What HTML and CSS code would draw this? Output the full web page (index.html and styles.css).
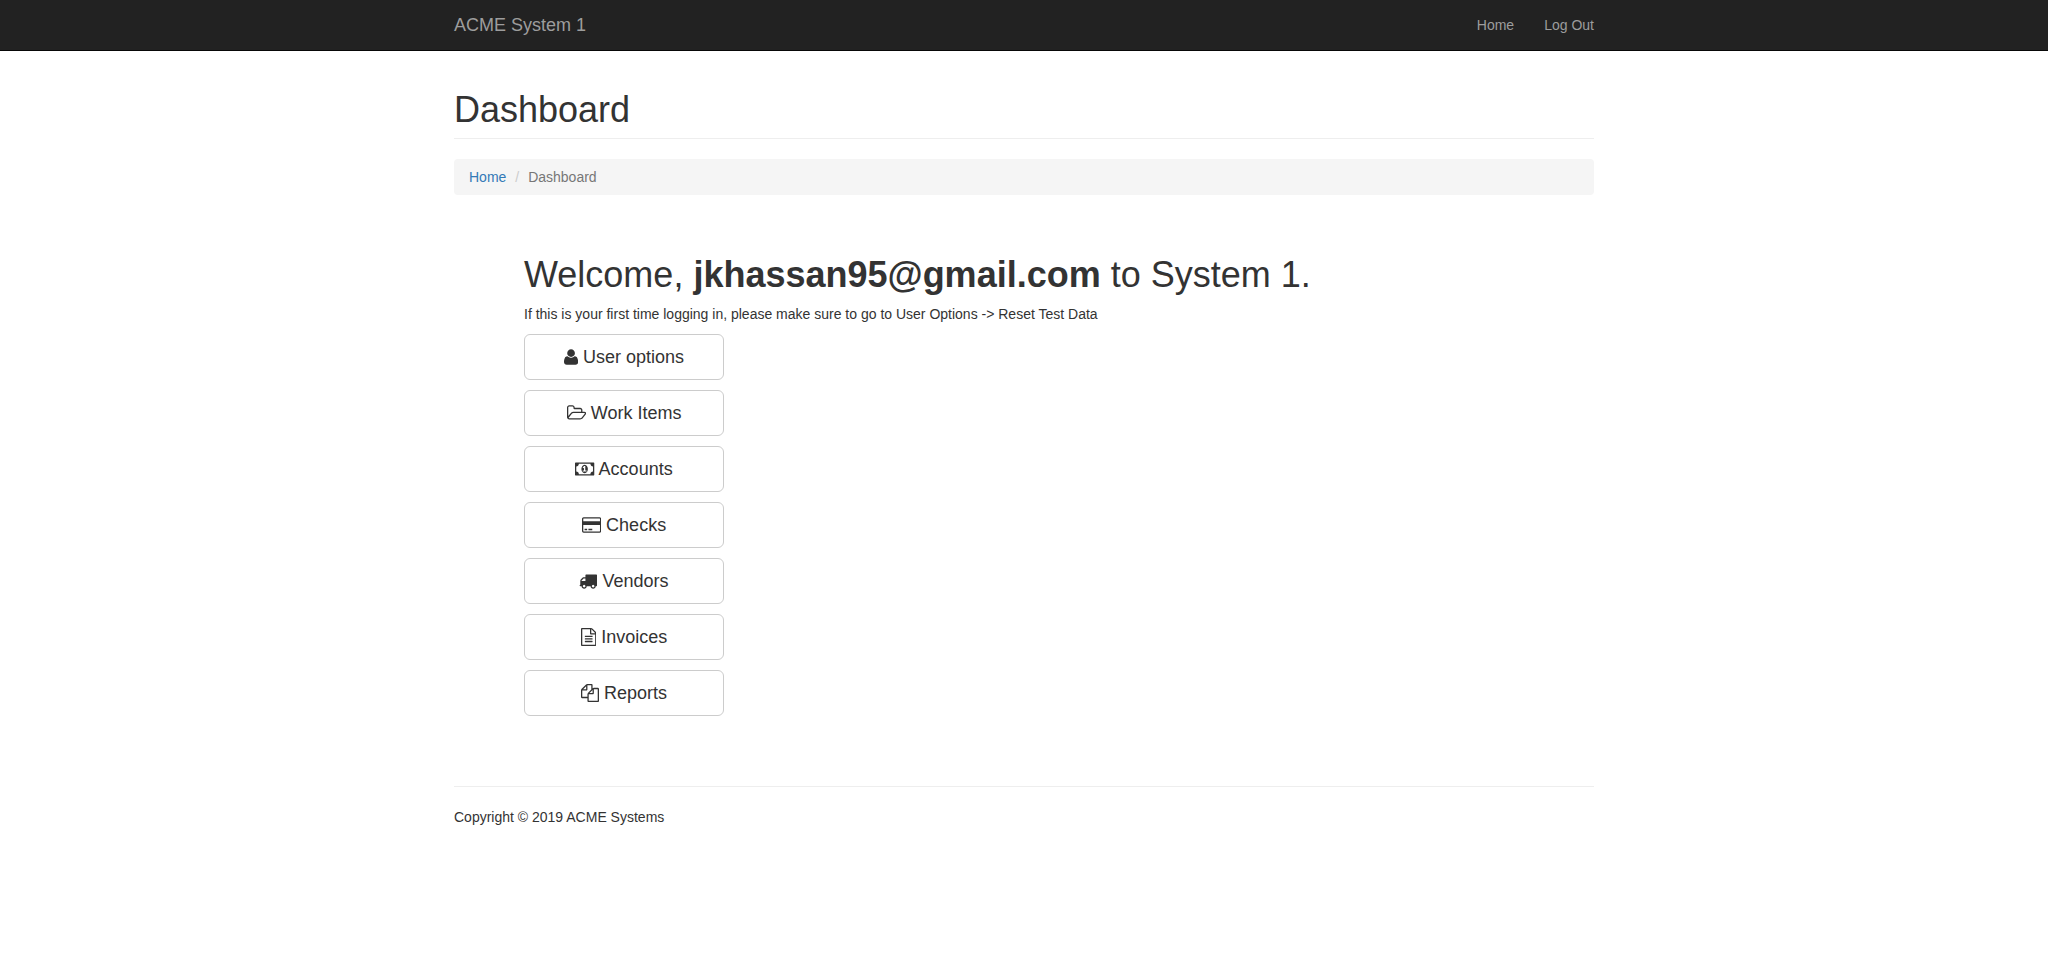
FILE: index.html
```html
<!DOCTYPE html>
<html lang="en">
<head>
<meta charset="utf-8">
<title>ACME System 1 - Dashboard</title>
<link rel="stylesheet" href="styles.css">
</head>
<body>
<nav class="navbar">
  <div class="container navbar-inner">
    <a class="navbar-brand" href="#">ACME System 1</a>
    <ul class="navbar-links">
      <li><a href="#">Home</a></li>
      <li><a href="#">Log Out</a></li>
    </ul>
  </div>
</nav>
<div class="container">
  <h1 class="page-header">Dashboard</h1>
  <ul class="breadcrumb">
    <li><a href="#">Home</a></li>
    <li class="active">Dashboard</li>
  </ul>
  <main class="welcome">
    <h1>Welcome, <b>jkhassan95@gmail.com</b> to System 1.</h1>
    <p>If this is your first time logging in, please make sure to go to User Options -&gt; Reset Test Data</p>
    <div class="menu">
      <button class="btn"><svg class="icon icon-user" viewBox="192 0 1408 1792"><path d="M1600 1405q0 120-73 189.5t-194 69.5h-874q-121 0-194-69.5t-73-189.5q0-53 3.5-103.5t14-109 26.5-108.5 43-97.5 62-81 85.5-53.5 111.5-20q9 0 42 21.5t74.5 48 108 48 133.5 21.5 133.5-21.5 108-48 74.5-48 42-21.5q61 0 111.5 20t85.5 53.5 62 81 43 97.5 26.5 108.5 14 109 3.5 103.5zm-320-893q0 159-112.5 271.5t-271.5 112.5-271.5-112.5-112.5-271.5 112.5-271.5 271.5-112.5 271.5 112.5 112.5 271.5z"/></svg> User options</button>
      <button class="btn"><svg class="icon icon-wide" viewBox="64 0 1920 1792"><path d="M1845 931q0-35-53-35h-1088q-40 0-85.5 21.5t-71.5 52.5l-294 363q-18 24-18 40 0 35 53 35h1088q40 0 86-22t71-53l294-363q18-22 18-39zm-1141-163h768v-160q0-40-28-68t-68-28h-576q-40 0-68-28t-28-68v-64q0-40-28-68t-68-28h-320q-40 0-68 28t-28 68v853l256-315q44-53 116-87.5t140-34.5zm1269 163q0 62-46 120l-295 363q-43 53-116 87.5t-140 34.5h-1088q-92 0-158-66t-66-158v-960q0-92 66-158t158-66h320q92 0 158 66t66 158v32h544q92 0 158 66t66 158v160h192q54 0 99 24.5t67 70.5q15 32 15 68z"/></svg> Work Items</button>
      <button class="btn"><svg class="icon icon-wide" viewBox="0 0 1920 1792"><path d="M768 1152h384v-96h-128v-448h-114l-148 137 77 80q42-37 55-57h2v288h-128v96zm512-256q0 70-21 142t-59.5 134-101.5 101-138 39-138-39-101.5-101-59.5-134-21-142 21-142 59.5-134 101.5-101 138-39 138 39 101.5 101 59.5 134 21 142zm512 256v-512q-106 0-181-75t-75-181h-1152q0 106-75 181t-181 75v512q106 0 181 75t75 181h1152q0-106 75-181t181-75zm128-832v1152q0 26-19 45t-45 19h-1792q-26 0-45-19t-19-45v-1152q0-26 19-45t45-19h1792q26 0 45 19t19 45z"/></svg> Accounts</button>
      <button class="btn"><svg class="icon icon-wide" viewBox="0 0 1920 1792"><path d="M1760 128q66 0 113 47t47 113v1216q0 66-47 113t-113 47h-1600q-66 0-113-47t-47-113v-1216q0-66 47-113t113-47h1600zm-1600 128q-13 0-22.5 9.5t-9.5 22.5v224h1664v-224q0-13-9.5-22.5t-22.5-9.5h-1600zm1600 1280q13 0 22.5-9.5t9.5-22.5v-608h-1664v608q0 13 9.5 22.5t22.5 9.5h1600zm-1504-128v-128h256v128h-256zm384 0v-128h384v128h-384z"/></svg> Checks</button>
      <button class="btn"><svg class="icon" viewBox="0 0 1792 1792"><path d="M640 1408q0-52-38-90t-90-38-90 38-38 90 38 90 90 38 90-38 38-90zm-384-512h384v-256h-158q-13 0-22 9l-195 195q-9 9-9 22v30zm1280 512q0-52-38-90t-90-38-90 38-38 90 38 90 90 38 90-38 38-90zm256-1088v1024q0 15-4 26.5t-13.5 18.5-16.5 11.5-23.5 6-22.5 2-25.5 0-22.5-.5q0 106-75 181t-181 75-181-75-75-181h-384q0 106-75 181t-181 75-181-75-75-181h-64q-3 0-22.5.5t-25.5 0-22.5-2-23.5-6-16.5-11.5-13.5-18.5-4-26.5q0-26 19-45t45-19v-320q0-8-.5-35t0-38 2.5-34.5 6.5-37 14-30.5 22.5-30l198-198q19-19 50.5-32t58.5-13h160v-192q0-26 19-45t45-19h1024q26 0 45 19t19 45z"/></svg> Vendors</button>
      <button class="btn"><svg class="icon icon-file" viewBox="128 0 1536 1792"><path d="M1596 380q28 28 48 76t20 88v1152q0 40-28 68t-68 28h-1344q-40 0-68-28t-28-68v-1600q0-40 28-68t68-28h896q40 0 88 20t76 48zm-444-244v376h376q-10-29-22-41l-313-313q-12-12-41-22zm384 1528v-1024h-416q-40 0-68-28t-28-68v-416h-768v1536h1280zm-1024-864q0-14 9-23t23-9h704q14 0 23 9t9 23v64q0 14-9 23t-23 9h-704q-14 0-23-9t-9-23v-64zm736 224q14 0 23 9t9 23v64q0 14-9 23t-23 9h-704q-14 0-23-9t-9-23v-64q0-14 9-23t23-9h704zm0 256q14 0 23 9t9 23v64q0 14-9 23t-23 9h-704q-14 0-23-9t-9-23v-64q0-14 9-23t23-9h704z"/></svg> Invoices</button>
      <button class="btn"><svg class="icon" viewBox="0 0 1792 1792"><path d="M1696 384q40 0 68 28t28 68v1216q0 40-28 68t-68 28h-960q-40 0-68-28t-28-68v-288h-544q-40 0-68-28t-28-68v-672q0-40 20-88t48-76l408-408q28-28 76-48t88-20h416q40 0 68 28t28 68v328q68-40 128-40h416zm-544 213l-299 299h299v-299zm-640-384l-299 299h299v-299zm196 647l316-316v-416h-384v416q0 40-28 68t-68 28h-416v640h512v-256q0-40 20-88t48-76zm956 804v-1152h-384v416q0 40-28 68t-68 28h-416v640h896z"/></svg> Reports</button>
    </div>
  </main>
  <footer class="footer"><p>Copyright © 2019 ACME Systems</p></footer>
</div>
</body>
</html>
```
FILE: styles.css
```css
* { box-sizing: border-box; }
body {
  margin: 0;
  background: #fff;
  color: #333;
  font-family: "Liberation Sans", Arial, sans-serif;
  font-size: 14px;
  line-height: 20px;
}
a { color: #337ab7; text-decoration: none; }
p { margin: 0; }
.container { width: 1140px; margin: 0 auto; }
.navbar { height: 51px; background: #222; border-bottom: 1px solid #080808; }
.navbar-inner { display: flex; justify-content: space-between; }
.navbar a { color: #9d9d9d; }
.navbar-brand { padding: 15px 0; font-size: 18px; }
.navbar-links { display: flex; gap: 30px; margin: 0; padding: 15px 0; list-style: none; }
h1 { margin: 0; font-size: 36px; font-weight: 500; line-height: 1.1; }
.page-header { margin-top: 39px; padding-bottom: 8.4px; border-bottom: 1px solid #eee; font-weight: 400; }
.breadcrumb {
  display: flex;
  margin: 20px 0 0;
  padding: 8px 15px;
  border-radius: 4px;
  background: #f5f5f5;
  list-style: none;
}
.breadcrumb .active { color: #777; }
.breadcrumb .active::before { content: "/\00a0"; padding: 0 5px 0 9px; color: #ccc; }
.welcome { padding: 60px 70px 70px; }
.welcome h1 { font-weight: 400; margin-bottom: 9.4px; }
.menu { display: flex; flex-direction: column; align-items: flex-start; gap: 10px; margin-top: 10px; }
.btn {
  width: 200px;
  height: 46px;
  padding: 0;
  border: 1px solid #ccc;
  border-radius: 6px;
  background: #fff;
  color: #333;
  font: 18px/24px "Liberation Sans", Arial, sans-serif;
}
.icon { width: 18px; height: 18px; vertical-align: -2.57px; fill: currentColor; }
.icon-user { width: 14.14px; }
.icon-wide { width: 19.28px; }
.icon-file { width: 15.43px; }
.footer { padding-top: 20px; border-top: 1px solid #eee; }
```
